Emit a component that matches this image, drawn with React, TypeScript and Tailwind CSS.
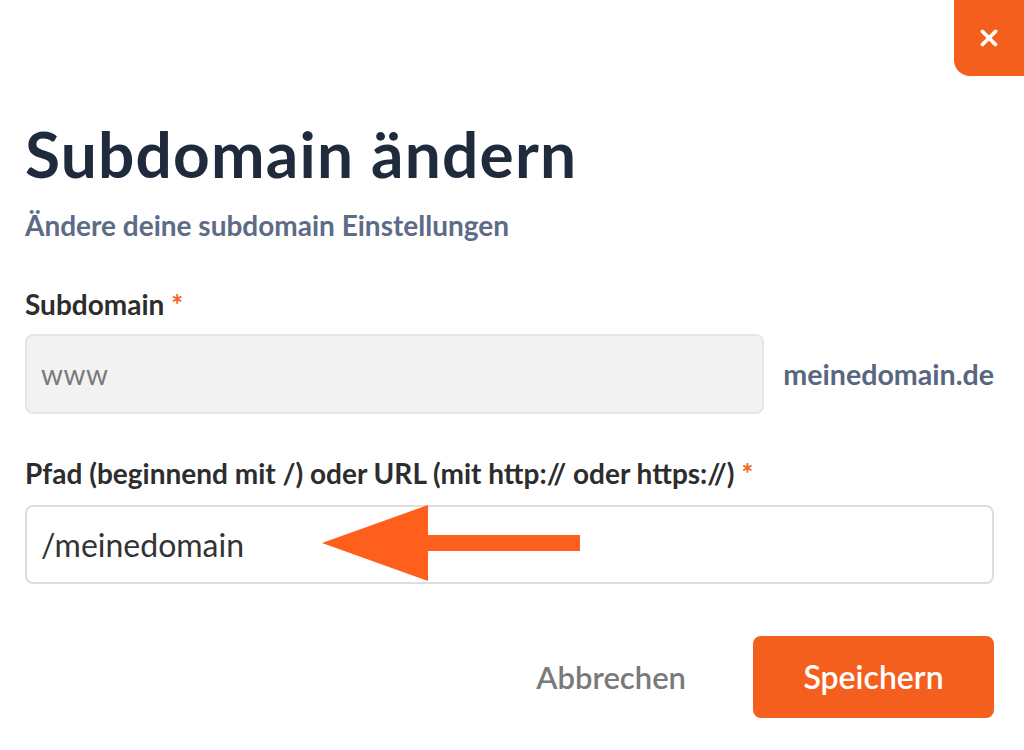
import { X } from "lucide-react";

function Label({ children }: { children: React.ReactNode }) {
  return (
    <label className="block text-[28px] font-bold leading-none text-[#2d2d2d]">
      {children} <span className="text-[#f26522]">*</span>
    </label>
  );
}

function Arrow() {
  return (
    <svg width="260" height="76" viewBox="0 0 260 76" className="pointer-events-none absolute left-[297px] top-[0px]">
      <polygon points="0,38 106,0 106,30 258,30 258,46 106,46 106,76" fill="#fe5f1c" />
    </svg>
  );
}

export default function App() {
  return (
    <div className="relative h-[750px] w-[1024px] overflow-hidden bg-white font-['Lato',sans-serif]">
      <button className="absolute right-0 top-0 flex h-[76px] w-[70px] items-center justify-center rounded-bl-2xl bg-[#f55f1e] text-white">
        <X size={26} strokeWidth={3.5} />
      </button>

      <div className="pl-[25px] pr-[30px] pt-[122px]">
        <h1 className="text-[64px] font-bold leading-none tracking-[1.2px] text-[#1f2a3d]">Subdomain ändern</h1>
        <p className="mt-[25px] text-[28px] font-bold leading-none text-[#5d6b86]">
          Ändere deine subdomain Einstellungen
        </p>

        <div className="mt-[51px]">
          <Label>Subdomain</Label>
          <div className="mt-[16px] flex items-center gap-[19px]">
            <div className="flex h-[80px] flex-1 items-center rounded-lg border-2 border-[#e6e6e6] bg-[#f2f2f2] pl-[14px] text-[28px] tracking-[0.5px] text-[#7a7a7a]">
              www
            </div>
            <span className="text-[28.6px] font-bold text-[#58667f]">meinedomain.de</span>
          </div>
        </div>

        <div className="mt-[45px]">
          <Label>Pfad (beginnend mit /) oder URL (mit http:// oder https://)</Label>
          <div className="relative mt-[18px]">
            <div className="flex h-[79px] items-center rounded-lg border-2 border-[#dedede] bg-white pl-[14px] text-[32px] text-[#333333]">
              /meinedomain
            </div>
            <Arrow />
          </div>
        </div>

        <div className="mt-[52px] flex items-center justify-end gap-[67px]">
          <button className="text-[31px] font-semibold text-[#7a7a7a]">Abbrechen</button>
          <button className="flex h-[82px] w-[241px] items-center justify-center rounded-lg bg-[#f55f1e] text-[32px] font-semibold text-white">
            Speichern
          </button>
        </div>
      </div>
    </div>
  );
}
